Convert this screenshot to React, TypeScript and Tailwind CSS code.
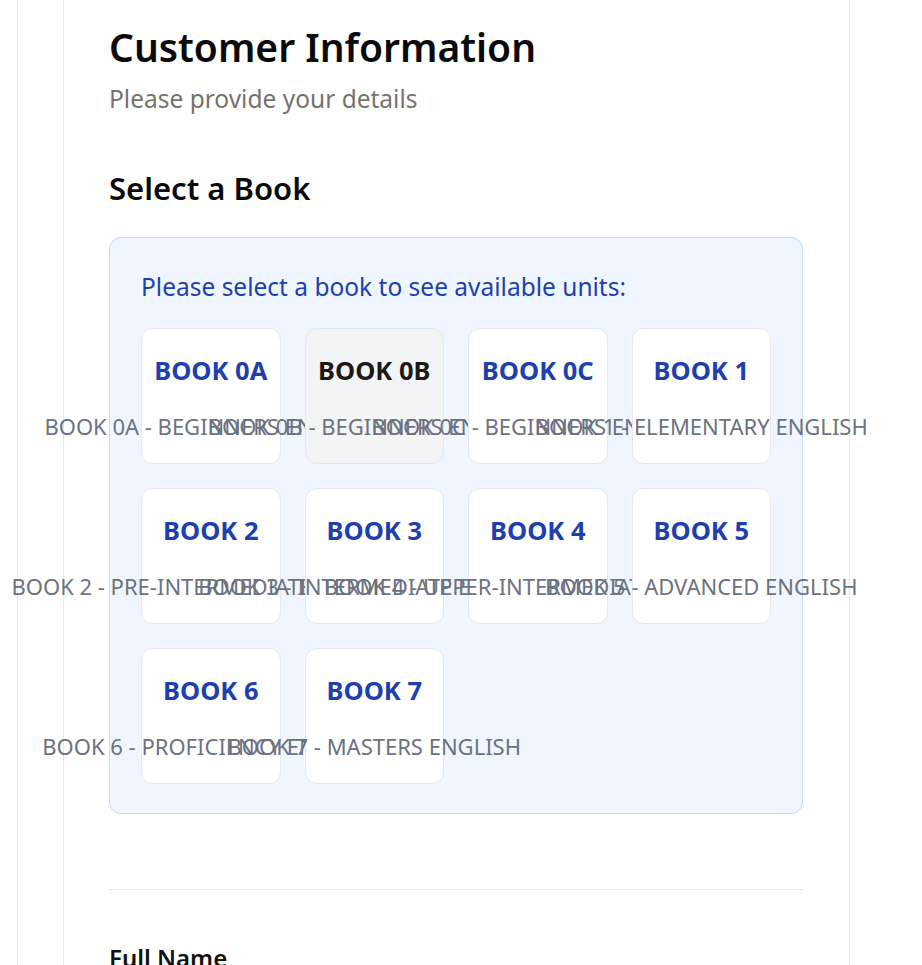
import React from "react";

const books = [
  { code: "BOOK 0A", desc: "BOOK 0A - BEGINNERS ENGLISH" },
  { code: "BOOK 0B", desc: "BOOK 0B - BEGINNERS ENGLISH", selected: true },
  { code: "BOOK 0C", desc: "BOOK 0C - BEGINNERS ENGLISH" },
  { code: "BOOK 1", desc: "BOOK 1 - ELEMENTARY ENGLISH" },
  { code: "BOOK 2", desc: "BOOK 2 - PRE-INTERMEDIATE ENGLISH" },
  { code: "BOOK 3", desc: "BOOK 3 - INTERMEDIATE ENGLISH" },
  { code: "BOOK 4", desc: "BOOK 4 - UPPER-INTERMEDIATE ENGLISH" },
  { code: "BOOK 5", desc: "BOOK 5 - ADVANCED ENGLISH" },
  { code: "BOOK 6", desc: "BOOK 6 - PROFICIENCY ENGLISH" },
  { code: "BOOK 7", desc: "BOOK 7 - MASTERS ENGLISH" },
];

export default function App() {
  return (
    <div
      className="w-[922px] h-[965px] overflow-hidden bg-white"
      style={{ fontFamily: '"Noto Sans", "Open Sans", sans-serif' }}
    >
      <div className="ml-[17px] w-[1000px] h-[965px] border-l border-[#e5e7eb] pl-[45px]">
        <div className="w-[787px] h-[965px] border-x border-[#e5e7eb] pl-[45px] pr-[46px] pt-[23px]">
          <h1 className="text-[39px] leading-[48px] font-semibold text-[#0a0a0a]">
            Customer Information
          </h1>
          <p className="mt-[12px] text-[24.5px] leading-[32px] text-[#78716c]">
            Please provide your details
          </p>
          <h2 className="mt-[53px] text-[31px] leading-[40px] font-semibold text-[#0a0a0a]">
            Select a Book
          </h2>
          <div className="mt-[29px] rounded-xl border border-[#bfdbfe] bg-[#eff6ff] px-[31px] pt-[29px] pb-[29px]">
            <p className="text-[24.5px] leading-[40px] text-[#1e40af]">
              Please select a book to see available units:
            </p>
            <div className="mt-[21px] grid grid-cols-4 gap-x-[24px] gap-y-[24px]">
              {books.map((b) => (
                <div
                  key={b.code}
                  className={
                    "h-[136px] rounded-xl border border-[#e5e7eb] flex flex-col items-center pt-[25px] " +
                    (b.selected ? "bg-[#f3f4f6]" : "bg-white")
                  }
                >
                  <div
                    className={
                      "text-[25.5px] leading-[32px] font-bold whitespace-nowrap " +
                      (b.selected ? "text-[#1c1917]" : "text-[#1e40af]")
                    }
                  >
                    {b.code}
                  </div>
                  <div className="mt-[26px] text-[22px] leading-[28px] text-[#6b7280] whitespace-nowrap">
                    {b.desc}
                  </div>
                </div>
              ))}
            </div>
          </div>
          <div className="mt-[75px] h-px bg-[#e5e7eb]" />
          <div className="mt-[53px] text-[24px] leading-[30px] font-semibold text-[#111111]">
            Full Name
          </div>
        </div>
      </div>
    </div>
  );
}
